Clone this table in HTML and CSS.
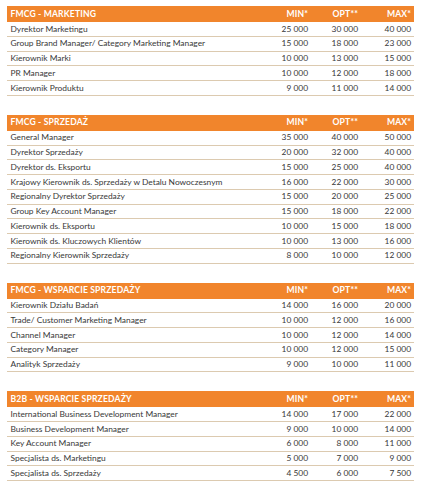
FILE: index.html
```html
<!DOCTYPE html>
<html lang="pl">
<head>
<meta charset="utf-8">
<title>Wynagrodzenia</title>
<link rel="stylesheet" href="styles.css">
</head>
<body>
<main class="page">
  <section class="tbl">
    <div class="row head"><span class="name">FMCG - MARKETING</span><span class="num">MIN*</span><span class="num">OPT**</span><span class="num">MAX*</span></div>
    <div class="row"><span class="name">Dyrektor Marketingu</span><span class="num">25 000</span><span class="num">30 000</span><span class="num">40 000</span></div>
    <div class="row"><span class="name">Group Brand Manager/ Category Marketing Manager</span><span class="num">15 000</span><span class="num">18 000</span><span class="num">23 000</span></div>
    <div class="row"><span class="name">Kierownik Marki</span><span class="num">10 000</span><span class="num">13 000</span><span class="num">15 000</span></div>
    <div class="row"><span class="name">PR Manager</span><span class="num">10 000</span><span class="num">12 000</span><span class="num">18 000</span></div>
    <div class="row"><span class="name">Kierownik Produktu</span><span class="num">9 000</span><span class="num">11 000</span><span class="num">14 000</span></div>
  </section>
  <section class="tbl">
    <div class="row head"><span class="name">FMCG - SPRZEDAŻ</span><span class="num">MIN*</span><span class="num">OPT**</span><span class="num">MAX*</span></div>
    <div class="row"><span class="name">General Manager</span><span class="num">35 000</span><span class="num">40 000</span><span class="num">50 000</span></div>
    <div class="row"><span class="name">Dyrektor Sprzedaży</span><span class="num">20 000</span><span class="num">32 000</span><span class="num">40 000</span></div>
    <div class="row"><span class="name">Dyrektor ds. Eksportu</span><span class="num">15 000</span><span class="num">25 000</span><span class="num">40 000</span></div>
    <div class="row"><span class="name">Krajowy Kierownik ds. Sprzedaży w Detalu Nowoczesnym</span><span class="num">16 000</span><span class="num">22 000</span><span class="num">30 000</span></div>
    <div class="row"><span class="name">Regionalny Dyrektor Sprzedaży</span><span class="num">15 000</span><span class="num">20 000</span><span class="num">25 000</span></div>
    <div class="row"><span class="name">Group Key Account Manager</span><span class="num">15 000</span><span class="num">18 000</span><span class="num">22 000</span></div>
    <div class="row"><span class="name">Kierownik ds. Eksportu</span><span class="num">10 000</span><span class="num">15 000</span><span class="num">18 000</span></div>
    <div class="row"><span class="name">Kierownik ds. Kluczowych Klientów</span><span class="num">10 000</span><span class="num">13 000</span><span class="num">16 000</span></div>
    <div class="row"><span class="name">Regionalny Kierownik Sprzedaży</span><span class="num">8 000</span><span class="num">10 000</span><span class="num">12 000</span></div>
  </section>
  <section class="tbl">
    <div class="row head"><span class="name">FMCG - WSPARCIE SPRZEDAŻY</span><span class="num">MIN*</span><span class="num">OPT**</span><span class="num">MAX*</span></div>
    <div class="row"><span class="name">Kierownik Działu Badań</span><span class="num">14 000</span><span class="num">16 000</span><span class="num">20 000</span></div>
    <div class="row"><span class="name">Trade/ Customer Marketing Manager</span><span class="num">10 000</span><span class="num">12 000</span><span class="num">16 000</span></div>
    <div class="row"><span class="name">Channel Manager</span><span class="num">10 000</span><span class="num">12 000</span><span class="num">14 000</span></div>
    <div class="row"><span class="name">Category Manager</span><span class="num">10 000</span><span class="num">12 000</span><span class="num">15 000</span></div>
    <div class="row"><span class="name">Analityk Sprzedaży</span><span class="num">9 000</span><span class="num">10 000</span><span class="num">11 000</span></div>
  </section>
  <section class="tbl">
    <div class="row head"><span class="name">B2B - WSPARCIE SPRZEDAŻY</span><span class="num">MIN*</span><span class="num">OPT**</span><span class="num">MAX*</span></div>
    <div class="row"><span class="name">International Business Development Manager</span><span class="num">14 000</span><span class="num">17 000</span><span class="num">22 000</span></div>
    <div class="row"><span class="name">Business Development Manager</span><span class="num">9 000</span><span class="num">10 000</span><span class="num">14 000</span></div>
    <div class="row"><span class="name">Key Account Manager</span><span class="num">6 000</span><span class="num">8 000</span><span class="num">11 000</span></div>
    <div class="row"><span class="name">Specjalista ds. Marketingu</span><span class="num">5 000</span><span class="num">7 000</span><span class="num">9 000</span></div>
    <div class="row"><span class="name">Specjalista ds. Sprzedaży</span><span class="num">4 500</span><span class="num">6 000</span><span class="num">7 500</span></div>
  </section>
</main>
</body>
</html>
```
FILE: styles.css
```css
html, body {
  margin: 0;
  padding: 0;
  background: #ffffff;
}
.page {
  margin: 6px 11px 0 7px;
  display: flex;
  flex-direction: column;
  gap: 19px;
  font-family: Lato, "Liberation Sans", sans-serif;
  color: #383838;
}
.tbl {
  display: flex;
  flex-direction: column;
}
.row {
  display: grid;
  grid-template-columns: 1fr 50px 50px 53px;
  padding: 0 3px 0 3.5px;
  height: 14.75px;
  box-sizing: border-box;
  align-items: center;
  border-bottom: 1px solid #dccab0;
  font-size: 8.4px;
  line-height: 1;
  white-space: nowrap;
}
.row.head {
  height: 16px;
  background: #f1852c;
  color: #ffffff;
  font-weight: 700;
  font-size: 8.6px;
  border-bottom: none;
  letter-spacing: 0.15px;
}
.num {
  text-align: right;
}
```
